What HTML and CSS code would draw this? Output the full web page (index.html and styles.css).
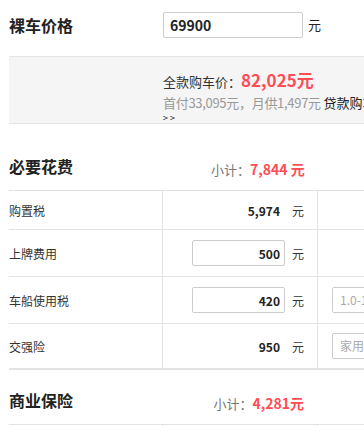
FILE: index.html
```html
<!DOCTYPE html>
<html lang="zh">
<head>
<meta charset="utf-8">
<link rel="stylesheet" href="styles.css">
</head>
<body>
<div class="page">
  <div class="price-row">
    <h2 class="title">裸车价格</h2>
    <div class="price-field">
      <input class="price-input" value="69900">
      <span class="unit">元</span>
    </div>
  </div>

  <div class="summary">
    <div class="total"><span class="total-lbl">全款购车价：</span><span class="total-num">82,025元</span></div>
    <div class="loan">首付33,095元，月供1,497元 <span class="loan-link">贷款购车</span></div>
    <div class="more">&gt; &gt;</div>
  </div>

  <div class="sec-head first">
    <h2 class="title">必要花费</h2>
    <div class="subtotal"><span class="sub-lbl">小计：</span><span class="sub-num">7,844 元</span></div>
  </div>
  <div class="table">
    <div class="row">
      <div class="c1">购置税</div>
      <div class="c2"><span class="val">5,974</span><span class="u">元</span></div>
      <div class="c3"></div>
    </div>
    <div class="row tall">
      <div class="c1">上牌费用</div>
      <div class="c2"><input class="cell-input" value="500"><span class="u">元</span></div>
      <div class="c3"></div>
    </div>
    <div class="row tall">
      <div class="c1">车船使用税</div>
      <div class="c2"><input class="cell-input" value="420"><span class="u">元</span></div>
      <div class="c3"><div class="select">1.0-1.6L(含)</div></div>
    </div>
    <div class="row last">
      <div class="c1">交强险</div>
      <div class="c2"><span class="val">950</span><span class="u">元</span></div>
      <div class="c3"><div class="select">家用6座以下</div></div>
    </div>
  </div>

  <div class="sec-head second">
    <h2 class="title">商业保险</h2>
    <div class="subtotal"><span class="sub-lbl">小计：</span><span class="sub-num">4,281元</span></div>
  </div>
  <div class="table">
    <div class="row stub">
      <div class="c1"></div>
      <div class="c2"></div>
      <div class="c3"></div>
    </div>
  </div>
</div>
</body>
</html>
```

FILE: styles.css
```css
html, body {
  margin: 0;
  padding: 0;
  background: #fff;
  overflow: hidden;
}
body {
  font-family: "Noto Sans CJK SC", "Open Sans", sans-serif;
  color: #333;
  font-size: 12px;
}
.page {
  width: 520px;
  padding-left: 9px;
}
.title {
  margin: 0;
  font-size: 16px;
  font-weight: bold;
  color: #222;
  line-height: 20px;
}
.price-row {
  display: flex;
  align-items: center;
  height: 56px;
  padding-bottom: 7px;
  box-sizing: border-box;
}
.price-row .title {
  width: 154px;
}
.price-field {
  display: flex;
  align-items: center;
}
.price-input {
  width: 140px;
  height: 26px;
  box-sizing: border-box;
  border: 1px solid #ccc;
  border-radius: 2px;
  padding: 0 6px;
  font-family: "Noto Sans CJK SC", sans-serif;
  font-weight: bold;
  font-size: 14px;
  color: #222;
}
.unit {
  margin-left: 5px;
  font-size: 13px;
  line-height: 20px;
  color: #222;
}
.summary {
  background: #f5f5f5;
  border-top: 1px solid #e3e3e3;
  border-bottom: 1px solid #e3e3e3;
  height: 68px;
  box-sizing: border-box;
  padding-left: 154px;
  padding-top: 12px;
}
.total {
  display: flex;
  align-items: baseline;
  height: 22px;
  line-height: 22px;
}
.total-lbl {
  font-size: 13px;
  color: #333;
}
.total-num {
  font-size: 17px;
  font-weight: bold;
  color: #ff4d55;
}
.loan {
  font-size: 13px;
  color: #999;
  white-space: nowrap;
  line-height: 20px;
  height: 20px;
  margin-top: 2px;
  letter-spacing: -0.3px;
}
.loan-link {
  color: #222;
  letter-spacing: 0;
}
.more {
  font-size: 9px;
  line-height: 10px;
  height: 10px;
  color: #222;
}
.sec-head {
  display: flex;
  align-items: flex-start;
  height: 44px;
  line-height: 20px;
  box-sizing: border-box;
  padding-top: 10px;
}
.sec-head.first {
  margin-top: 22px;
}
.sec-head.second {
  margin-top: 10px;
}
.sec-head .title {
  width: 202px;
}
.subtotal {
  width: 93px;
  margin-top: 3px;
  text-align: right;
  white-space: nowrap;
}
.sub-lbl {
  font-size: 13px;
  color: #777;
}
.sub-num {
  font-size: 14px;
  font-weight: bold;
  color: #ff4d55;
}
.table {
  border-top: 1px solid #e3e3e3;
}
.row {
  display: grid;
  grid-template-columns: 153px 155px 1fr;
  height: 39px;
  box-sizing: border-box;
  border-bottom: 1px solid #e3e3e3;
}
.row.tall {
  height: 47px;
}
.row.last {
  height: 46px;
  border-bottom: 2px solid #e3e3e3;
}
.row.stub {
  height: 10px;
  border-bottom: none;
}
.c1 {
  display: flex;
  align-items: center;
  font-size: 12px;
  color: #333;
}
.c2 {
  display: flex;
  align-items: center;
  justify-content: flex-end;
  padding-right: 13px;
  border-left: 1px solid #e3e3e3;
}
.c3 {
  display: flex;
  align-items: center;
  padding-left: 14px;
  border-left: 1px solid #e3e3e3;
}
.val {
  font-weight: bold;
  font-size: 12px;
  color: #222;
}
.u {
  margin-left: 12px;
  font-size: 12px;
  color: #333;
}
.row.tall .u {
  margin-left: 7px;
}
.cell-input {
  width: 93px;
  height: 26px;
  box-sizing: border-box;
  border: 1px solid #ccc;
  border-radius: 2px;
  padding: 0 4px;
  text-align: right;
  font-family: "Noto Sans CJK SC", sans-serif;
  font-weight: bold;
  font-size: 12px;
  color: #222;
}
.select {
  width: 110px;
  height: 26px;
  box-sizing: border-box;
  border: 1px solid #ccc;
  border-radius: 2px;
  padding-left: 7px;
  font-size: 12px;
  line-height: 24px;
  color: #aaa;
  white-space: nowrap;
}
```
